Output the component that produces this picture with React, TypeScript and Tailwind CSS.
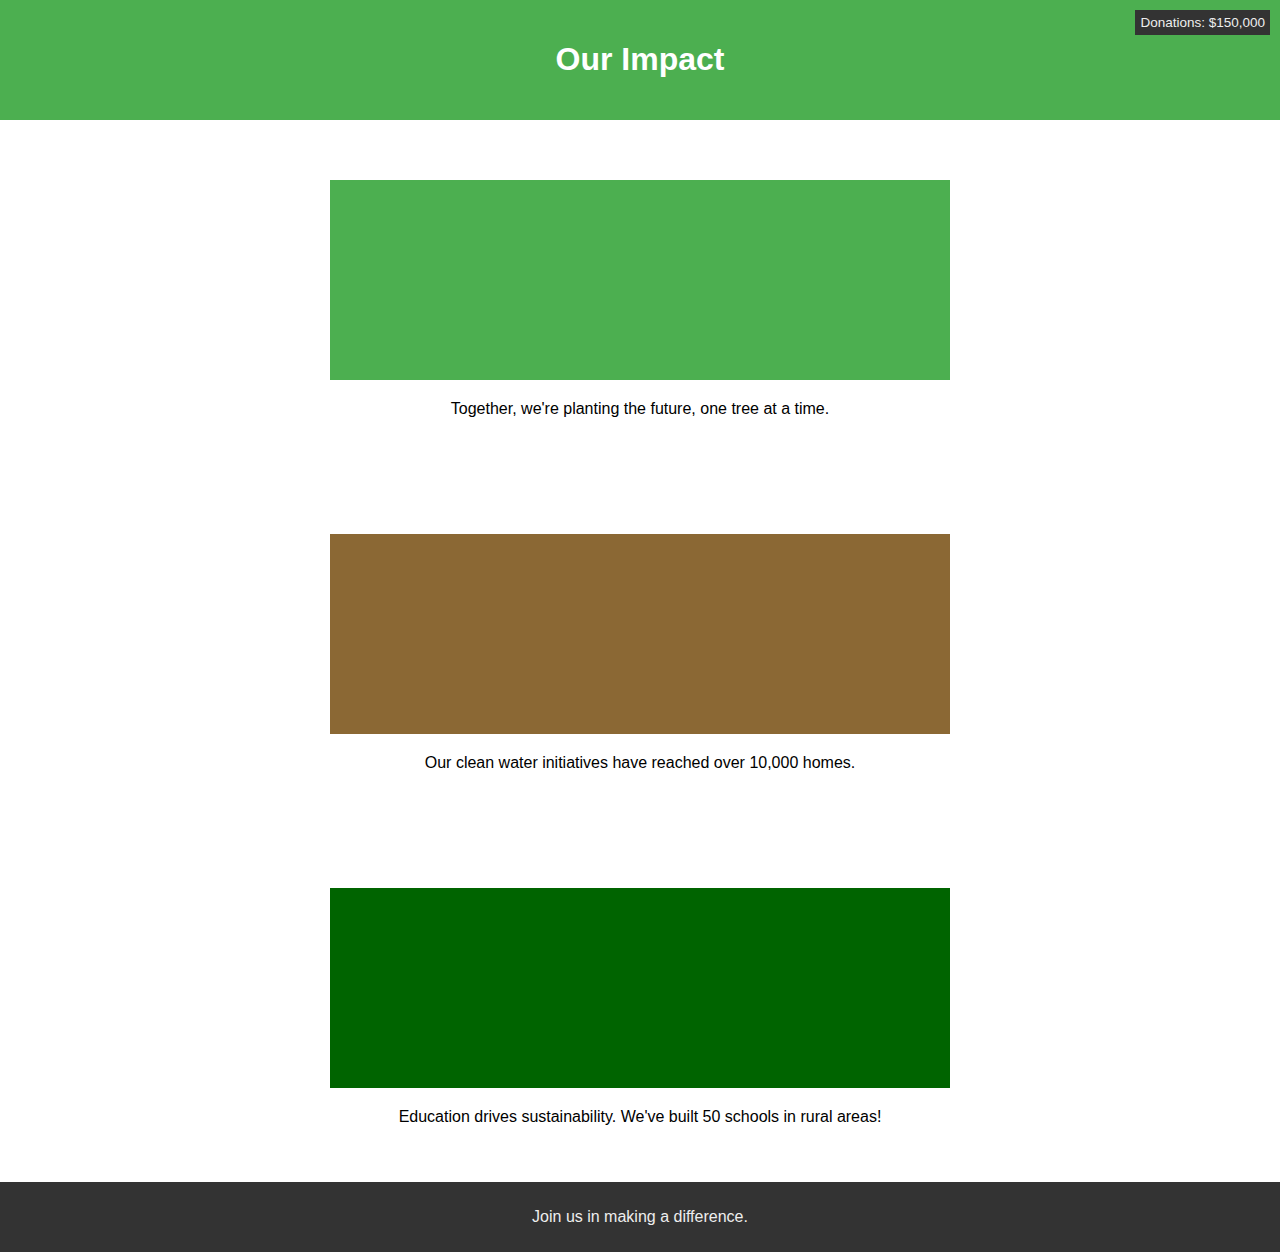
import React from 'react';

const impacts = [
  { color: 'bg-[#4caf50]', text: "Together, we're planting the future, one tree at a time." },
  { color: 'bg-[#8b6834]', text: 'Our clean water initiatives have reached over 10,000 homes.' },
  { color: 'bg-[#006400]', text: "Education drives sustainability. We've built 50 schools in rural areas!" },
];

const App: React.FC = () => {
  return (
    <div className="min-h-[1252px] bg-white flex flex-col font-['Liberation_Sans',Arial,sans-serif]">
      <header className="relative h-[120px] bg-[#4caf50] flex items-center justify-center pb-[2px]">
        <h1 className="text-[32px] font-bold text-white leading-none">Our Impact</h1>
        <div className="absolute top-[10px] right-[10px] bg-[#333333] text-[#eeeeee] text-[13.5px] leading-[15px] px-[5px] py-[5px]">
          Donations: $150,000
        </div>
      </header>

      <main className="flex-1 flex flex-col items-center gap-[113px] pt-[60px] pb-[53px]">
        {impacts.map((item) => (
          <section key={item.text} className="w-[620px] flex flex-col items-center">
            <div className={`w-[620px] h-[200px] ${item.color}`} />
            <p className="mt-[17px] text-base leading-6 text-black text-center">{item.text}</p>
          </section>
        ))}
      </main>

      <footer className="h-[70px] bg-[#333333] flex items-center justify-center">
        <p className="text-base text-[#eeeeee]">Join us in making a difference.</p>
      </footer>
    </div>
  );
};

export default App;
